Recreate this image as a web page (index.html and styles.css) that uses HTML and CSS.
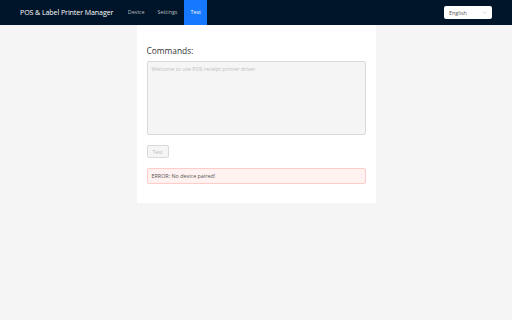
FILE: index.html
```html
<!DOCTYPE html>
<html>
<head>
<meta charset="utf-8">
<link rel="stylesheet" href="styles.css">
</head>
<body>
<header class="topbar">
  <div class="brand">POS &amp; Label Printer Manager</div>
  <nav class="nav">
    <a class="nav-item">Device</a>
    <a class="nav-item">Settings</a>
    <a class="nav-item active">Test</a>
  </nav>
  <div class="spacer"></div>
  <div class="lang">
    <span>English</span>
    <svg class="chev" viewBox="0 0 8 5" width="5" height="3"><path d="M1 1 L4 4 L7 1" fill="none" stroke="#bbb" stroke-width="1"/></svg>
  </div>
</header>
<main class="main">
  <section class="card">
    <h2 class="title">Commands:</h2>
    <div class="textarea">Welcome to use POS receipt printer driver.</div>
    <button class="btn">Test</button>
    <div class="alert">ERROR: No device paired!</div>
  </section>
</main>
</body>
</html>
```
FILE: styles.css
```css
* { box-sizing: border-box; }
html, body { margin: 0; padding: 0; }
body {
  background: #f5f5f5;
  font-family: "Open Sans", "Noto Sans", sans-serif;
  width: 512px;
  height: 320px;
  overflow: hidden;
}
.topbar {
  height: 25px;
  background: #001529;
  display: flex;
  align-items: stretch;
  padding: 0 20px 0 20px;
}
.brand {
  color: #fff;
  font-size: 7.1px;
  line-height: 25px;
  letter-spacing: -0.1px;
  margin-right: 8px;
}
.nav { display: flex; }
.nav-item {
  color: rgba(255,255,255,0.7);
  font-size: 5.4px;
  line-height: 25px;
  padding: 0 6.5px;
}
.nav-item.active {
  background: #1677ff;
  color: #fff;
}
.spacer { flex: 1; }
.lang {
  align-self: center;
  width: 48px;
  height: 13px;
  background: #fff;
  border-radius: 2px;
  display: flex;
  align-items: center;
  justify-content: space-between;
  padding: 0 5px 0 5px;
  font-size: 5.4px;
  color: #555;
}
.chev { display: block; }
.main {
  display: flex;
  justify-content: center;
}
.card {
  width: 239px;
  background: #fff;
  padding: 21px 10px 19px 10px;
}
.title {
  margin: 0 0 5px 0;
  font-size: 8.4px;
  font-weight: 500;
  color: #333;
  line-height: 10px;
}
.textarea {
  height: 74px;
  background: #f5f5f5;
  border: 1px solid #d9d9d9;
  border-radius: 2px;
  padding: 3px 4px;
  font-size: 5.3px;
  color: #c0c0c0;
  margin-bottom: 10px;
}
.btn {
  display: block;
  height: 13px;
  width: 22px;
  padding: 0;
  background: #f5f5f5;
  border: 1px solid #d9d9d9;
  border-radius: 2px;
  font-family: inherit;
  font-size: 5.2px;
  color: #bbb;
  margin-bottom: 10px;
}
.alert {
  height: 16px;
  background: #fff2f0;
  border: 1px solid #ffccc7;
  border-radius: 2px;
  padding: 0 4px;
  font-size: 5.4px;
  line-height: 14px;
  color: #555;
}
```
